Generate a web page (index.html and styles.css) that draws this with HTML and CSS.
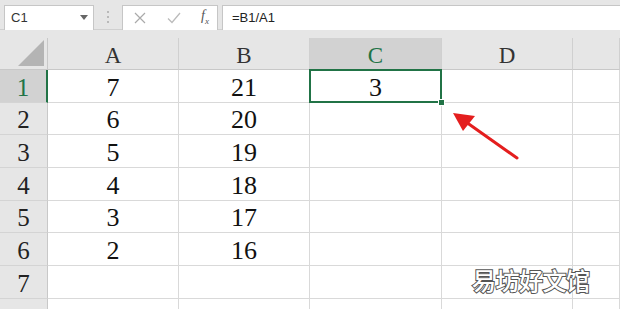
FILE: index.html
```html
<!DOCTYPE html>
<html lang="zh-CN">
<head>
    <meta charset="UTF-8">
    <meta name="viewport" content="width=device-width, initial-scale=1.0">
    <title>Excel - B1/A1</title>
    <link rel="stylesheet" href="styles.css">
</head>
<body>
    <div class="toolbar">
        <div class="name-box">
            <span>C1</span>
            <svg class="caret" width="8" height="5" viewBox="0 0 8 5"><path d="M0 0H8L4 5Z" fill="#666"/></svg>
        </div>
        <svg class="grip" width="4" height="14" viewBox="0 0 4 14">
            <circle cx="2" cy="2" r="1" fill="#aaa"/>
            <circle cx="2" cy="7" r="1" fill="#aaa"/>
            <circle cx="2" cy="12" r="1" fill="#aaa"/>
        </svg>
        <div class="fx-box">
            <svg width="12" height="12" viewBox="0 0 12 12"><path d="M1 1L11 11M11 1L1 11" stroke="#aaa" stroke-width="1.2"/></svg>
            <svg width="14" height="12" viewBox="0 0 14 12"><path d="M1 6.5L5 10.5L13 1" stroke="#bbb" stroke-width="1.3" fill="none"/></svg>
            <span class="fx">f<sub>x</sub></span>
        </div>
        <div class="formula">=B1/A1</div>
    </div>

    <div class="sheet">
        <div class="corner"><div class="tri"></div></div>
        <div class="col-head">A</div>
        <div class="col-head">B</div>
        <div class="col-head active">C</div>
        <div class="col-head">D</div>
        <div class="col-head"></div>

        <div class="row-head active">1</div>
        <div class="cell">7</div>
        <div class="cell">21</div>
        <div class="cell selected">3<div class="sel"><div class="handle"></div></div></div>
        <div class="cell"></div>
        <div class="cell"></div>

        <div class="row-head">2</div>
        <div class="cell">6</div>
        <div class="cell">20</div>
        <div class="cell"></div>
        <div class="cell"></div>
        <div class="cell"></div>

        <div class="row-head">3</div>
        <div class="cell">5</div>
        <div class="cell">19</div>
        <div class="cell"></div>
        <div class="cell"></div>
        <div class="cell"></div>

        <div class="row-head">4</div>
        <div class="cell">4</div>
        <div class="cell">18</div>
        <div class="cell"></div>
        <div class="cell"></div>
        <div class="cell"></div>

        <div class="row-head">5</div>
        <div class="cell">3</div>
        <div class="cell">17</div>
        <div class="cell"></div>
        <div class="cell"></div>
        <div class="cell"></div>

        <div class="row-head">6</div>
        <div class="cell">2</div>
        <div class="cell">16</div>
        <div class="cell"></div>
        <div class="cell"></div>
        <div class="cell"></div>

        <div class="row-head">7</div>
        <div class="cell"></div>
        <div class="cell"></div>
        <div class="cell"></div>
        <div class="cell"></div>
        <div class="cell"></div>

        <div class="row-head"></div>
        <div class="cell"></div>
        <div class="cell"></div>
        <div class="cell"></div>
        <div class="cell"></div>
        <div class="cell"></div>
    </div>

    <!-- annotation arrow pointing at the fill handle -->
    <svg class="arrow" width="620" height="309" viewBox="0 0 620 309">
        <line x1="517" y1="158" x2="466" y2="122" stroke="#e41e1e" stroke-width="3" stroke-linecap="round"/>
        <path d="M453 113L475 116L463 131Z" fill="#e41e1e"/>
    </svg>

    <div class="watermark">易坊好文馆</div>
</body>
</html>
```

FILE: styles.css
```css
* {
    box-sizing: border-box;
}

body {
    margin: 0;
    width: 620px;
    height: 309px;
    overflow: hidden;
    background: #e6e6e6;
    font-family: "Liberation Sans", Arial, sans-serif;
    position: relative;
}

.toolbar {
    display: flex;
    align-items: center;
    height: 30px;
    padding: 5px 0 0 4px;
    border-bottom: 1px solid #d0d0d0;
}

.name-box {
    width: 90px;
    height: 25px;
    background: white;
    border: 1px solid #c6c6c6;
    border-bottom: none;
    display: flex;
    align-items: center;
    justify-content: space-between;
    padding: 0 5px 0 6px;
    font-size: 13px;
    color: #333;
}

.grip {
    margin: 0 12px 0 12px;
}

.fx-box {
    width: 96px;
    height: 25px;
    background: white;
    border: 1px solid #c6c6c6;
    border-bottom: none;
    display: flex;
    align-items: center;
    justify-content: space-between;
    padding: 0 8px 0 11px;
}

.fx {
    font-family: "Liberation Serif", serif;
    font-style: italic;
    font-size: 14px;
    color: #555;
    line-height: 1;
}

.fx sub {
    font-size: 9px;
}

.formula {
    flex: 1;
    height: 25px;
    margin-left: 4px;
    background: white;
    border: 1px solid #c6c6c6;
    border-right: none;
    border-bottom: none;
    padding: 4px 0 0 9px;
    font-size: 13px;
    color: #222;
}

.sheet {
    margin-top: 8px;
    display: grid;
    grid-template-columns: 48px 131px 131px 132px 131px 1fr;
    grid-template-rows: 32px 33px 32px 33px 33px 32px 33px 33px 20px;
    font-family: "Liberation Serif", "Times New Roman", serif;
}

.corner {
    position: relative;
    border-right: 1px solid #c8c8c8;
    border-bottom: 1px solid #c8c8c8;
}

.tri {
    position: absolute;
    right: 3px;
    bottom: 3px;
    width: 26px;
    height: 26px;
    background: #b4b4b4;
    clip-path: polygon(100% 0, 100% 100%, 0 100%);
}

.col-head {
    border-right: 1px solid #d0d0d0;
    border-bottom: 1px solid #c8c8c8;
    display: flex;
    align-items: center;
    justify-content: center;
    padding-top: 4px;
    font-size: 23px;
    color: #333;
}

.row-head {
    border-right: 1px solid #c8c8c8;
    border-bottom: 1px solid #d4d4d4;
    display: flex;
    align-items: center;
    justify-content: center;
    padding-top: 3px;
    font-size: 25px;
    color: #222;
}

.col-head.active,
.row-head.active {
    background: #d2d2d2;
    color: #217346;
}

.row-head.active {
    border-right: 2px solid #217346;
}

.cell {
    background: white;
    border-right: 1px solid #d9d9d9;
    border-bottom: 1px solid #d9d9d9;
    display: flex;
    align-items: center;
    justify-content: center;
    padding-top: 3px;
    font-size: 26px;
    color: #111;
}

.cell.selected {
    position: relative;
}

.sel {
    position: absolute;
    top: -1px;
    left: -1px;
    right: -1px;
    bottom: -1px;
    border: 2px solid #217346;
}

.handle {
    position: absolute;
    right: -5px;
    bottom: -5px;
    width: 7px;
    height: 7px;
    background: #217346;
    border: 1px solid white;
}

.arrow {
    position: absolute;
    left: 0;
    top: 0;
}

.watermark {
    position: absolute;
    left: 472px;
    top: 262px;
    font-family: "Noto Sans CJK SC", sans-serif;
    font-size: 24px;
    font-weight: 500;
    letter-spacing: -0.5px;
    color: white;
    -webkit-text-stroke: 2px #555;
    paint-order: stroke fill;
}
```
